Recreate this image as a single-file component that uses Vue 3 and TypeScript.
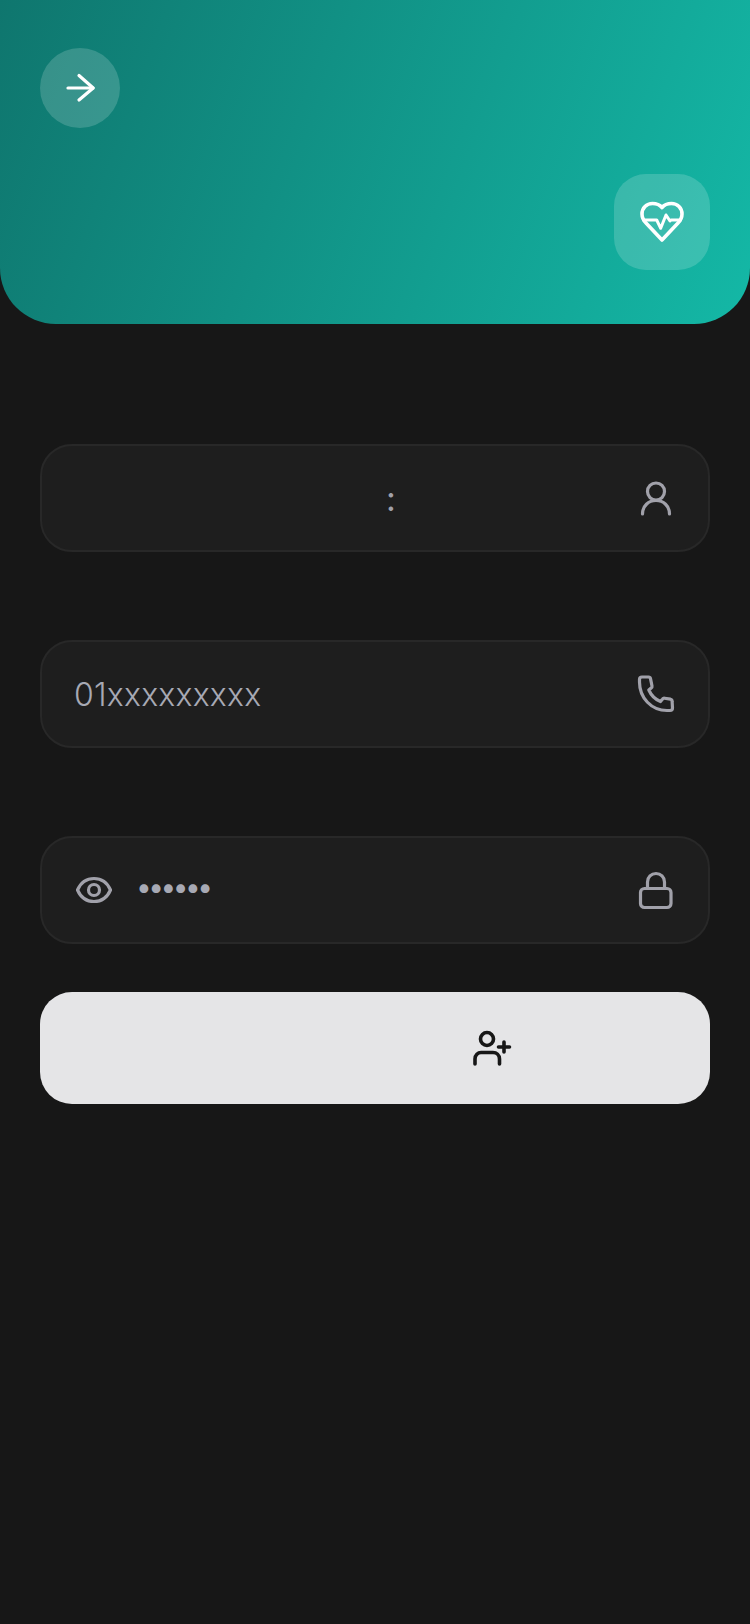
<template>
  <div class="page">
    <header class="hero">
      <button class="back" type="button" aria-label="back">
        <svg width="40" height="40" viewBox="0 0 40 40" class="ic white">
          <path d="M8 20H33" />
          <path d="M19 7.5L33.2 20L19 32" />
        </svg>
      </button>
      <div class="tile">
        <svg width="48" height="48" viewBox="0 0 48 48" class="ic white thick">
          <path d="M24 9.5C21.5 6.5 18 5.5 14.5 5.5C8.5 5.5 4 10 4 16C4 19.5 5.5 22.5 8 25L24 42L40 25C42.5 22.5 44 19.5 44 16C44 10 39.5 5.5 33.5 5.5C30 5.5 26.5 6.5 24 9.5Z" />
          <path d="M5.5 22H18.7L22.7 30.3L28 17L32 23L33 22H42.5" class="thin" />
        </svg>
      </div>
    </header>

    <form class="form" @submit.prevent>
      <div class="fields">
        <label class="field">
          <span class="colon">:</span>
          <svg width="40" height="40" viewBox="0 0 40 40" class="ic grey">
            <circle cx="20" cy="13.5" r="8.5" />
            <path d="M6.5 36C6.5 28 12.5 22.5 20 22.5S33.5 28 33.5 36" />
          </svg>
        </label>

        <label class="field">
          <input class="text" type="tel" :placeholder="phoneHint" />
          <svg width="40" height="40" viewBox="0 0 40 40" class="ic grey">
            <path d="M6 3H12.5A2 2 0 0 1 14.5 4.6L16 12A2 2 0 0 1 15.2 14L12.8 16C15 21 19.5 25.5 24.5 27.5L26.6 25A2 2 0 0 1 28.6 24.2L34.5 25.2A2 2 0 0 1 36.1 27.2L36.5 34A2.5 2.5 0 0 1 34 36.5H31C15.5 36.5 3.5 24 3.5 8V5.5A2.5 2.5 0 0 1 6 3Z" />
          </svg>
        </label>

        <label class="field">
          <svg width="40" height="40" viewBox="0 0 40 40" class="ic grey eye">
            <path d="M3.5 20C7 12 13 8.5 20 8.5S33 12 36.5 20C33 28 27 31.5 20 31.5S7 28 3.5 20Z" />
            <circle cx="20" cy="20" r="5.5" />
          </svg>
          <input class="text dots" type="text" :placeholder="passwordHint" />
          <svg width="40" height="40" viewBox="0 0 40 40" class="ic grey">
            <rect x="4.5" y="18.5" width="30.5" height="19" rx="4" />
            <path d="M11.5 18V12A8.5 8.5 0 0 1 28.5 12V18" />
          </svg>
        </label>
      </div>

      <button class="submit" type="submit" aria-label="register">
        <svg width="40" height="40" viewBox="0 0 40 40" class="ic dark thick">
          <circle cx="15" cy="11" r="6.5" />
          <path d="M3 36V31C3 27 6 24.5 9 24.5H21C24.5 24.5 27.5 27 27.5 31V36" />
          <path d="M32 14V24M26.5 19H37.5" />
        </svg>
      </button>
    </form>
  </div>
</template>

<script setup lang="ts">
const phoneHint = '01xxxxxxxxx'
const passwordHint = '••••••'
</script>

<style scoped>
.page {
  min-height: 1624px;
  background: #171717;
  font-family: Inter, "Noto Sans", sans-serif;
}

.hero {
  height: 324px;
  box-sizing: border-box;
  padding: 48px 40px 54px;
  display: flex;
  flex-direction: column;
  justify-content: space-between;
  align-items: flex-start;
  border-radius: 0 0 56px 56px;
  background: linear-gradient(110deg, #0f766e, #14b8a6);
}

.back {
  width: 80px;
  height: 80px;
  padding: 0;
  border: none;
  border-radius: 50%;
  background: rgba(255, 255, 255, 0.17);
  display: flex;
  align-items: center;
  justify-content: center;
}

.tile {
  width: 96px;
  height: 96px;
  align-self: flex-end;
  border-radius: 32px;
  background: rgba(255, 255, 255, 0.17);
  display: flex;
  align-items: center;
  justify-content: center;
}

.ic {
  flex: none;
  fill: none;
  stroke-width: 3.2;
  stroke-linecap: round;
  stroke-linejoin: round;
}

.thick {
  stroke-width: 3.6;
}

.thin {
  stroke-width: 3;
}

.white {
  stroke: #fff;
}

.grey {
  stroke: #a1a1aa;
}

.dark {
  stroke: #171717;
}

.form {
  padding: 120px 40px 0;
}

.fields {
  display: flex;
  flex-direction: column;
  gap: 88px;
}

.field {
  height: 108px;
  box-sizing: border-box;
  padding: 0 32px;
  display: flex;
  align-items: center;
  background: #1e1e1e;
  border: 2px solid #282828;
  border-radius: 32px;
}

.colon {
  flex: 1;
  padding-left: 312px;
  font-size: 34px;
  color: #a1a1aa;
}

.text {
  flex: 1;
  min-width: 0;
  padding: 0;
  border: none;
  outline: none;
  background: transparent;
  font-family: inherit;
  font-size: 32px;
  font-weight: 300;
  letter-spacing: 0.2px;
  color: #e5e5e7;
}

.text::placeholder {
  color: #a7a9b4;
  opacity: 1;
}

.eye {
  margin-right: 22px;
}

.dots {
  height: 44px;
  padding-bottom: 6px;
  box-sizing: border-box;
  font-size: 28px;
  letter-spacing: -3.5px;
  font-weight: 400;
}

.submit {
  width: 100%;
  height: 112px;
  margin-top: 48px;
  padding: 0 0 0 432px;
  border: none;
  border-radius: 32px;
  background: #e5e5e7;
  display: flex;
  align-items: center;
}
</style>

<style>
body {
  background: #171717;
}
</style>
